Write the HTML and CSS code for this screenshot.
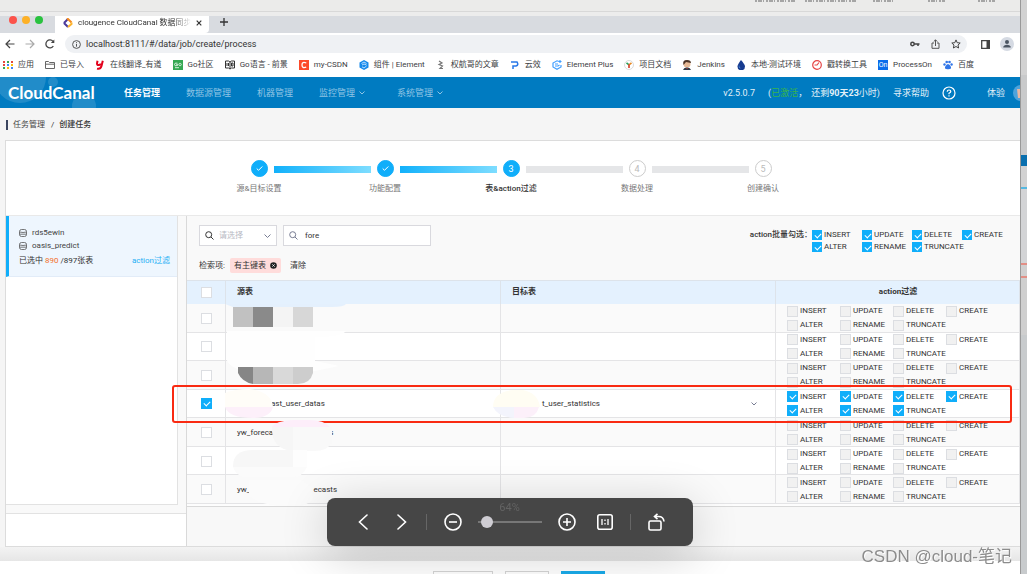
FILE: index.html
```html
<!DOCTYPE html>
<html lang="zh-CN">
<head>
<meta charset="utf-8">
<title>clougence CloudCanal 数据同步</title>
<link rel="stylesheet" href="styles.css">
</head>
<body>
<div class="desktop">
<div class="window">
  <div class="behind"><svg width="260" height="4" viewBox="0 0 260 4" aria-hidden="true"><path d="M0 1H40M50 1H102M118 1H138M173 1H190M223 1H240" stroke="#a5a5a5" stroke-width="2" stroke-dasharray="2 1 4 1 1 2"/></svg></div>

  <div class="tabbar">
    <div class="lights"><i class="red"></i><i class="amber"></i><i class="green"></i></div>
    <div class="tab">
      <svg width="10" height="10" viewBox="0 0 10 10" fill="none" stroke-width="2"><path d="M5 1 1.500 4.500v1L5 9" stroke="#4b3a9b"/><path d="M4 1.500 5 1l3.500 3.500" stroke="#f58b1f"/><path d="M8.500 4.500v1.500L5 9" stroke="#fdb52c"/></svg>
      <span class="tab-title">clougence CloudCanal 数据同步</span>
      <button class="icon-btn" aria-label="关闭"><svg width="6" height="6" viewBox="0 0 6 6" stroke="#333" stroke-width="1.200"><path d="m.7.7 4.600 4.600M5.300.7.7 5.300"/></svg></button>
    </div>
    <button class="icon-btn plus" aria-label="新标签页"><svg width="8" height="8" viewBox="0 0 8 8" stroke="#333" stroke-width="1.300"><path d="M4 0v8M0 4h8"/></svg></button>
  </div>

  <div class="toolbar">
    <button class="icon-btn" aria-label="后退"><svg width="10" height="10" viewBox="0 0 10 10" fill="none" stroke="#444" stroke-width="1.200"><path d="M9.500 5H1M5 1 1 5l4 4"/></svg></button>
    <button class="icon-btn" aria-label="前进"><svg width="10" height="10" viewBox="0 0 10 10" fill="none" stroke="#aaa" stroke-width="1.200"><path d="M.5 5H9M5 1l4 4-4 4"/></svg></button>
    <button class="icon-btn" aria-label="刷新"><svg width="10" height="10" viewBox="0 0 10 10" fill="none" stroke="#444" stroke-width="1.300"><path d="M8.300 7A4 4 0 1 1 8 2.400"/><path d="M9.300.5v3.500H5.800z" fill="#444" stroke="none"/></svg></button>
    <div class="address">
      <svg width="9" height="9" viewBox="0 0 9 9" fill="none" stroke="#555"><circle cx="4.500" cy="4.500" r="3.900"/><path d="M4.500 4v2.700M4.500 2.200v1"/></svg>
      <input class="url" aria-label="地址" value="localhost:8111/#/data/job/create/process">
      <svg width="10" height="8" viewBox="0 0 10 8" fill="none" stroke="#444" stroke-width="1.500"><circle cx="2.500" cy="4" r="1.700"/><path d="M4 4h5.500M8 4v2"/></svg>
      <svg width="9" height="10" viewBox="0 0 9 10" fill="none" stroke="#555"><path d="M3 4H1v5.300h7V4H6M4.500 7V1M2.700 2.600 4.500.8l1.800 1.800"/></svg>
      <svg width="10" height="10" viewBox="0 0 10 10" fill="none" stroke="#444"><path d="m5 .9 1.200 2.800 3 .3L7 6l.6 3L5 7.500 2.400 9 3 6 .8 4l3-.3z"/></svg>
    </div>
    <svg width="9" height="9" viewBox="0 0 9 9"><path d="M.7.7h7.600v7.600H.7z" fill="none" stroke="#444" stroke-width="1.300"/><path d="M5.500 0H9v9H5.500z" fill="#444"/></svg>
    <svg width="14" height="14" viewBox="0 0 14 14"><circle cx="7" cy="7" r="7" fill="#d5dae3"/><circle cx="7" cy="5" r="2" fill="#4b5563"/><path d="M3.200 10.500c0-3.600 7.600-3.600 7.600 0z" fill="#4b5563"/></svg>
  </div>

  <nav class="bookmarks" aria-label="书签">
    <a href="#"><svg viewBox="0 0 10 10"><path d="M0 2h10M0 5h10M0 8h10" stroke="#e5483b" stroke-width="2" stroke-dasharray="2"/><path d="M4 2h2M0 8h2" stroke="#35a853" stroke-width="2"/><path d="M4 5h2M8 8h2" stroke="#4285f4" stroke-width="2"/><path d="M8 5h2M4 8h2" stroke="#fbbc05" stroke-width="2"/></svg>应用</a>
    <a href="#"><svg viewBox="0 0 10 10" fill="none" stroke="#666"><path d="M.5 1.500h3l1 1h5v6h-9zM.5 4.200h9"/></svg>已导入</a>
    <a href="#"><svg viewBox="0 0 10 10" fill="none" stroke="#e3001b" stroke-width="2"><path d="M2.500.8 2 3.500q0 2 2 1.500l2-.8M7.800.8 6.500 6Q5.500 9.500 2 8.600"/></svg>在线翻译_有道</a>
    <a href="#"><svg viewBox="0 0 10 10"><path d="M0 0h10v10H0z" fill="#36a853"/><path d="M4.500 3.200q-3-.8-3 1.300t3 1V4.500H3.300M7 3.300a1.200 1.200 0 1 0 .1 0M2 7.700h4" fill="none" stroke="#fff" stroke-width=".8"/></svg>Go社区</a>
    <a href="#"><svg viewBox="0 0 10 10" fill="none" stroke="#333"><path d="M5 2v7L3.500 8H.5V1h3zM5 2l1.500-1h3v7h-3L5 9M2 3v3M3.500 3v3M6.500 3v3h1.500V3z"/></svg>Go语言 - 前景</a>
    <a href="#"><svg viewBox="0 0 10 10"><path d="M0 0h10v10H0z" fill="#fc4a2a"/><path d="M7.300 3Q3 1.300 3 5t4.200 2.200" fill="none" stroke="#fff" stroke-width="1.300"/></svg>my-CSDN</a>
    <a href="#"><svg viewBox="0 0 10 10"><path d="m5 0 4.500 2.500v5L5 10 .5 7.500v-5z" fill="#1689ea"/><path d="M2.500 3.500 5 2l2.500 1.500M3 5l2-1 2.500 1M3 6.800 5 8l2.500-2" fill="none" stroke="#b9ddff"/></svg>组件 | Element</a>
    <a href="#"><svg viewBox="0 0 10 10" fill="none" stroke="#777" stroke-width="1.200"><path d="m3 1 3 2-3 1.500L6.500 6 4 8.500h3"/></svg>权航哥的文章</a>
    <a href="#"><svg viewBox="0 0 10 10" fill="none" stroke="#2878e8" stroke-width="1.500"><path d="M1 2h6q2 3-1 4H3v3"/></svg>云效</a>
    <a href="#"><svg viewBox="0 0 10 10" fill="none" stroke="#409eff" stroke-width="1.200"><path d="M6.500 1.300 5 .8 1 3v4l4 2.200L9 7V5M3 4h3M3 6h3l1.500-1M8 0v3M6.500 1.500h3"/></svg>Element Plus</a>
    <a href="#"><svg viewBox="0 0 10 10" fill="none" stroke-width="1.700"><circle cx="5" cy="5" r="4.500" stroke="#ccc" stroke-width=".7"/><path d="m2.500 2.800 2.500 2" stroke="#28a05c"/><path d="M7.500 2.800 5 4.800" stroke="#e88924"/><path d="M5 4.500V8" stroke="#d8432f"/></svg>项目文档</a>
    <a href="#"><svg viewBox="0 0 10 10"><circle cx="5" cy="4" r="3.500" fill="#e6b995"/><path d="M1.500 5Q0 0 5 0q4 0 4 3L4 2z" fill="#4c3427"/><path d="M1 10q1-3 4-2.500Q8 7 9 10z" fill="#2d3944"/><path d="m4 8 1 1 1-1z" fill="#d33"/></svg>Jenkins</a>
    <a href="#"><svg viewBox="0 0 10 10"><path d="M5 0q4 4.500 4 6.500a3.500 3.500 0 0 1-7.500 0Q1.500 4.500 5 0" fill="#173b8f"/><path d="M3 5q-1 3 2 3.500Q3 7 3 5" fill="#4f9be8"/></svg>本地-测试环境</a>
    <a href="#"><svg viewBox="0 0 10 10" fill="none" stroke="#e64545" stroke-width="1.200"><circle cx="5" cy="5" r="4.300"/><path d="M7 2.500 5 5H2.500"/></svg>戳转换工具</a>
    <a href="#"><span class="on-mark">On</span>ProcessOn</a>
    <a href="#"><svg viewBox="0 0 10 10" fill="#3176e8"><circle cx="1.500" cy="4.500" r="1.200"/><circle cx="3.700" cy="2" r="1.300"/><circle cx="6.500" cy="2" r="1.300"/><circle cx="8.600" cy="4.500" r="1.200"/><path d="M5 4q1.500 0 3 3 .5 2.500-3 2.200Q1.500 9.500 2 7 3.500 4 5 4"/></svg>百度</a>
  </nav>

  <header class="app-nav">
    <svg class="bubbles" width="110" height="31" viewBox="0 0 110 31" fill="#fff" fill-opacity=".13" aria-hidden="true"><circle cx="20" cy="0" r="26"/><circle cx="53" cy="5" r="5"/><circle cx="84" cy="29" r="12"/></svg>
    <a class="logo" href="#">CloudCanal</a>
    <a class="menu on" href="#">任务管理</a>
    <a class="menu" href="#">数据源管理</a>
    <a class="menu" href="#">机器管理</a>
    <a class="menu drop" href="#">监控管理<svg width="6" height="4" viewBox="0 0 6 4" fill="none" stroke="currentColor"><path d="m.5.5 2.500 2.500L5.500.5"/></svg></a>
    <a class="menu" href="#">系统管理<svg width="6" height="4" viewBox="0 0 6 4" fill="none" stroke="currentColor"><path d="m.5.5 2.500 2.500L5.500.5"/></svg></a>
    <div class="status">
      <span>v2.5.0.7</span>
      <span class="license"><span>(<em>已激活</em>，</span><span>还剩<b>90天23</b>小时)</span></span>
      <a href="#">寻求帮助</a>
      <svg class="help" width="14" height="14" viewBox="0 0 14 14" fill="none" stroke="#fff" stroke-width="1.200"><circle cx="7" cy="7" r="6"/><path d="M5.200 5.700q0-1.700 1.800-1.700t1.800 1.500Q8.800 6.500 7 7.300v1M7 9.300v1.200"/></svg>
      <a class="trial" href="#">体验<svg width="7" height="16" viewBox="0 0 7 16"><circle cx="8" cy="8" r="8" fill="#4da3dc"/><path d="M4 4h3v9H5z" fill="#e9b8a2"/></svg></a>
    </div>
  </header>

  <div class="crumbs"><a href="#">任务管理</a><i>/</i><span>创建任务</span></div>

  <main class="card">
    <ol class="steps">
      <li class="step done"><i class="dot"><svg width="7" height="5" viewBox="0 0 7 5" fill="none" stroke="#fff"><path d="m.7 2.500 1.800 1.800L6.300.5"/></svg></i><span>源&amp;目标设置</span></li>
      <li class="bar filled"></li>
      <li class="step done"><i class="dot"><svg width="7" height="5" viewBox="0 0 7 5" fill="none" stroke="#fff"><path d="m.7 2.500 1.800 1.800L6.300.5"/></svg></i><span>功能配置</span></li>
      <li class="bar filled"></li>
      <li class="step done now"><i class="dot">3</i><span>表&amp;action过滤</span></li>
      <li class="bar"></li>
      <li class="step"><i class="dot">4</i><span>数据处理</span></li>
      <li class="bar"></li>
      <li class="step"><i class="dot">5</i><span>创建确认</span></li>
    </ol>

    <div class="split">
      <aside class="side">
        <div class="side-list">
          <div class="source">
            <div class="db"><svg width="8" height="8" viewBox="0 0 8 8" fill="none" stroke="#555" stroke-width=".8"><rect x=".5" y=".5" width="7" height="7" rx="2"/><path d="M.5 3q3.500 1 7 0M.5 5.200h7"/></svg>rds5ewin</div>
            <div class="db"><svg width="8" height="8" viewBox="0 0 8 8" fill="none" stroke="#555" stroke-width=".8"><rect x=".5" y=".5" width="7" height="7" rx="2"/><path d="M.5 3q3.500 1 7 0M.5 5.200h7"/></svg>oasis_predict</div>
            <div class="picked"><span>已选中 <em>890</em> /897张表</span><a href="#">action过滤</a></div>
          </div>
        </div>
        <div class="side-foot"></div>
      </aside>

      <section class="content">
        <div class="filters">
          <div class="search-side">
            <div class="fields">
              <div class="field pick">
                <svg width="9" height="9" viewBox="0 0 9 9" fill="none" stroke="#333"><circle cx="3.700" cy="3.700" r="3"/><path d="m6 6 2.500 2.500"/></svg>
                <select aria-label="筛选"><option>请选择</option></select>
                <svg width="7" height="4" viewBox="0 0 7 4" fill="none" stroke="#777c92"><path d="m.5.5 3 3 3-3"/></svg>
              </div>
              <div class="field find">
                <svg width="9" height="9" viewBox="0 0 9 9" fill="none" stroke="#777c92"><circle cx="3.700" cy="3.700" r="3"/><path d="m6 6 2.500 2.500"/></svg>
                <input aria-label="搜索表" value="fore">
              </div>
            </div>
            <div class="terms"><span>检索项:</span><span class="tag">有主键表<button class="icon-btn" aria-label="移除"><svg width="7" height="7" viewBox="0 0 7 7"><circle cx="3.500" cy="3.500" r="3.300" fill="#222"/><path d="m2.300 2.300 2.400 2.400M4.700 2.300 2.300 4.700" stroke="#fff" stroke-width=".8"/></svg></button></span><button class="clear">清除</button></div>
          </div>
          <div class="batch">
            <span>action批量勾选：</span>
            <div class="ops">
              <label><input type="checkbox" checked>INSERT</label><label><input type="checkbox" checked>UPDATE</label><label><input type="checkbox" checked>DELETE</label><label><input type="checkbox" checked>CREATE</label>
              <label><input type="checkbox" checked>ALTER</label><label><input type="checkbox" checked>RENAME</label><label><input type="checkbox" checked>TRUNCATE</label>
            </div>
          </div>
        </div>

        <div class="table-wrap">
          <table>
            <colgroup><col class="c-check"><col><col><col class="c-ops"></colgroup>
            <thead><tr><th class="tick"><input type="checkbox" aria-label="全选"></th><th>源表</th><th>目标表</th><th class="mid">action过滤</th></tr></thead>
            <tbody>
              <tr><td class="tick"><input type="checkbox" aria-label="选择第1行"></td><td></td><td></td><td><div class="ops"><label><input type="checkbox" disabled>INSERT</label><label><input type="checkbox" disabled>UPDATE</label><label><input type="checkbox" disabled>DELETE</label><label><input type="checkbox" disabled>CREATE</label><label><input type="checkbox" disabled>ALTER</label><label><input type="checkbox" disabled>RENAME</label><label><input type="checkbox" disabled>TRUNCATE</label></div></td></tr>
              <tr><td class="tick"><input type="checkbox" aria-label="选择第2行"></td><td></td><td></td><td><div class="ops"><label><input type="checkbox" disabled>INSERT</label><label><input type="checkbox" disabled>UPDATE</label><label><input type="checkbox" disabled>DELETE</label><label><input type="checkbox" disabled>CREATE</label><label><input type="checkbox" disabled>ALTER</label><label><input type="checkbox" disabled>RENAME</label><label><input type="checkbox" disabled>TRUNCATE</label></div></td></tr>
              <tr><td class="tick"><input type="checkbox" aria-label="选择第3行"></td><td></td><td></td><td><div class="ops"><label><input type="checkbox" disabled>INSERT</label><label><input type="checkbox" disabled>UPDATE</label><label><input type="checkbox" disabled>DELETE</label><label><input type="checkbox" disabled>CREATE</label><label><input type="checkbox" disabled>ALTER</label><label><input type="checkbox" disabled>RENAME</label><label><input type="checkbox" disabled>TRUNCATE</label></div></td></tr>
              <tr><td class="tick"><input type="checkbox" checked aria-label="选择第4行"></td><td><span class="hid lead"></span>ast_user_datas</td><td><div class="target"><span><span class="hid short"></span>t_user_statistics</span><svg width="6" height="4" viewBox="0 0 6 4" fill="none" stroke="#777c92"><path d="m.5.5 2.500 2.500L5.500.5"/></svg></div></td><td><div class="ops"><label><input type="checkbox" checked>INSERT</label><label><input type="checkbox" checked>UPDATE</label><label><input type="checkbox" checked>DELETE</label><label><input type="checkbox" checked>CREATE</label><label><input type="checkbox" checked>ALTER</label><label><input type="checkbox" checked>RENAME</label><label><input type="checkbox" checked>TRUNCATE</label></div></td></tr>
              <tr><td class="tick"><input type="checkbox" aria-label="选择第5行"></td><td>yw_foreca<span class="hid mid-gap"></span>s</td><td></td><td><div class="ops"><label><input type="checkbox" disabled>INSERT</label><label><input type="checkbox" disabled>UPDATE</label><label><input type="checkbox" disabled>DELETE</label><label><input type="checkbox" disabled>CREATE</label><label><input type="checkbox" disabled>ALTER</label><label><input type="checkbox" disabled>RENAME</label><label><input type="checkbox" disabled>TRUNCATE</label></div></td></tr>
              <tr><td class="tick"><input type="checkbox" aria-label="选择第6行"></td><td></td><td></td><td><div class="ops"><label><input type="checkbox" disabled>INSERT</label><label><input type="checkbox" disabled>UPDATE</label><label><input type="checkbox" disabled>DELETE</label><label><input type="checkbox" disabled>CREATE</label><label><input type="checkbox" disabled>ALTER</label><label><input type="checkbox" disabled>RENAME</label><label><input type="checkbox" disabled>TRUNCATE</label></div></td></tr>
              <tr><td class="tick"><input type="checkbox" aria-label="选择第7行"></td><td>yw_<span class="hid wide-gap"></span>ecasts</td><td></td><td><div class="ops"><label><input type="checkbox" disabled>INSERT</label><label><input type="checkbox" disabled>UPDATE</label><label><input type="checkbox" disabled>DELETE</label><label><input type="checkbox" disabled>CREATE</label><label><input type="checkbox" disabled>ALTER</label><label><input type="checkbox" disabled>RENAME</label><label><input type="checkbox" disabled>TRUNCATE</label></div></td></tr>
            </tbody>
          </table>
          <div class="marker"></div>
          <svg class="smudges" width="380" height="230" viewBox="0 0 380 230" aria-hidden="true">
            <path d="M38 24h121q-2 3-14 3H46z" fill="#e4f0fd"/>
            <path d="M40 51h119q-5 6-31 6v24q20 4 24 5l-24 5H68Q40 91 39 76z" fill="#fefefe"/>
            <path d="M46 27h20v20H46z" fill="#c1c1c1"/><path d="M66 27h20v20H66z" fill="#8a8a8a"/><path d="M86 27h20v20H86z" fill="#f4f4f4"/><path d="M106 27h20v20h-20z" fill="#d7d7d7"/>
            <path d="M51 87h15v17q-11-2-15-11z" fill="#868686"/><path d="M66 87h20v17H66z" fill="#b7b7b7"/><path d="M86 87h20v17H86z" fill="#d9d9d9"/><path d="M106 87h20v6q-3 11-15 11h-5z" fill="#cdcdcd"/>
            <path d="M38 127V113q10-4 24-4 23 3 24 18z" fill="#fffdf8"/><path d="M38 127h48q-3 11-20 11-24 0-28-11z" fill="#fdf0fa"/>
            <path d="M306 127q0-15 20-17h10q15 3 17 17z" fill="#fffdf3"/><path d="M306 127h21v11q-16-1-21-11z" fill="#f3f4fc"/><path d="M327 127h25q-3 11-15 11h-10z" fill="#fcf0fa"/>
            <path d="M85 147q3-6 22-7h15q15 0 21 7z" fill="#fdeefa"/><path d="M85 147h21v24q-22-2-21-24z" fill="#f6f6f6"/><path d="M106 147h39v15q-4 9-18 9h-21z" fill="#f9f9f9"/>
            <path d="M46 186q0-16 20-16h40v17H46z" fill="#f7f7f7"/><path d="M106 170h14v17h-14z" fill="#fdfdfd"/><path d="M46 187h74q-4 10-15 10H56q-8-3-10-10z" fill="#fbfbfb"/>
            <path d="M62 200h50q14 3 14 20l-10 6h-26q-20-3-28-10z" fill="#fbfbfb"/>
          </svg>
        </div>
        <div class="table-foot"></div>
      </section>
    </div>
  </main>

  <div class="page-shade"></div>
  <footer class="actions"><button aria-label="上一步"></button><button class="small" aria-label="取消"></button><button class="small primary" aria-label="下一步"></button></footer>
</div>
<div class="edge"></div>
</div>

<div class="viewer">
  <button class="icon-btn" aria-label="上一张"><svg width="10" height="16" viewBox="0 0 10 16" fill="none" stroke="#fff" stroke-width="1.600" stroke-linecap="round"><path d="M9 1 1.500 8 9 15"/></svg></button>
  <button class="icon-btn next" aria-label="下一张"><svg width="10" height="16" viewBox="0 0 10 16" fill="none" stroke="#fff" stroke-width="1.600" stroke-linecap="round"><path d="m1 1 7.500 7L1 15"/></svg></button>
  <i class="rule"></i>
  <button class="icon-btn" aria-label="缩小"><svg width="18" height="18" viewBox="0 0 18 18" fill="none" stroke="#fff" stroke-width="1.600"><circle cx="9" cy="9" r="8"/><path d="M5 9h8"/></svg></button>
  <div class="zoom"><output for="zoom">64%</output><input id="zoom" type="range" min="0" max="100" value="7" aria-label="缩放"></div>
  <button class="icon-btn" aria-label="放大"><svg width="18" height="18" viewBox="0 0 18 18" fill="none" stroke="#fff" stroke-width="1.600"><circle cx="9" cy="9" r="8"/><path d="M5 9h8M9 5v8"/></svg></button>
  <button class="icon-btn fit" aria-label="实际大小"><svg width="16" height="16" viewBox="0 0 16 16" fill="none" stroke="#fff" stroke-width="1.600"><rect x=".8" y=".8" width="14.400" height="14.400" rx="2"/><path d="M5 5v6M11 5v6M8 5.500V7M8 9v1.500" stroke-width="1.300"/></svg></button>
  <i class="rule"></i>
  <button class="icon-btn" aria-label="旋转"><svg width="17" height="18" viewBox="0 0 17 18" fill="none" stroke="#fff" stroke-width="1.600"><rect x="1" y="8" width="12" height="9" rx="1.500"/><path d="M9.500.8 6.500 3.500l3 2.700M7 3.500h3.500q5 0 5.500 5"/></svg></button>
</div>
<div class="watermark">CSDN @cloud-笔记</div>
</body>
</html>
```
FILE: styles.css
```css
* { box-sizing: border-box; }
html, body { height: 100%; margin: 0; overflow: hidden; }
body { font: 8px/12px Roboto, "Noto Sans CJK SC", sans-serif; color: #333; background: #fff; }
a { color: inherit; text-decoration: none; }
em, i { font-style: normal; }
svg { flex: none; display: block; }
button, input, select { font: inherit; color: inherit; margin: 0; }
.icon-btn { border: 0; padding: 0; background: none; display: flex; }

.desktop { display: flex; height: 100vh; overflow: hidden; }
.window { flex: 1; display: flex; flex-direction: column; min-width: 0; background: #f5f5f5; }
.window > * { flex: none; }
.edge { width: 7px; border-left: 1px solid #999; background: linear-gradient(#d2d2d2 0 75px, #c9cacb 75px 155px, #0a6fae 155px 166px, #d2d2d2 166px 187px, #56b8e0 187px 189px, #d3d4d6 189px 263px, #e28f86 263px 265px, #d0d0d0 265px 276px, #e28f86 276px 278px, #cfcfcf 278px 335px, #c8cbcd 335px); }

.behind { height: 16px; padding-left: 755px; overflow: hidden; background: linear-gradient(#ebebea 0 11px, #d8d8d8 11px 12px, #ececec 12px); }

.tabbar { display: flex; height: 17px; background: #d8dbe0; }
.lights { display: flex; gap: 5px; width: 55px; padding-left: 9px; }
.lights i { width: 8px; height: 8px; border-radius: 50%; }
.red { background: #fc534b; } .amber { background: #fdb127; } .green { background: #29c23f; }
.tab { display: flex; align-items: center; width: 154px; padding: 0 7px 4px 8px; gap: 5px; background: #fff; border-radius: 0 0 4px 0; }
.tab-title { flex: 1; overflow: hidden; white-space: nowrap; -webkit-mask-image: linear-gradient(90deg, #000 85%, transparent); mask-image: linear-gradient(90deg, #000 85%, transparent); }
.plus { padding: 2px 11px; }

.toolbar { display: flex; align-items: center; gap: 10px; height: 22px; padding: 0 6px 0 5px; background: #fff; }
.address { flex: 1; display: flex; align-items: center; gap: 11px; height: 18px; padding: 0 6px 0 7px; border-radius: 9px; background: #eff1f4; }
.address + svg { margin-left: 4px; }
.url { flex: 1; min-width: 0; margin-left: -6px; border: 0; padding: 0; background: none; font-size: 9px; color: #333; }

.bookmarks { display: flex; gap: 11px; height: 22px; padding: 0 3px 2px; background: #fff; white-space: nowrap; color: #3c4043; }
.bookmarks a { display: flex; align-items: center; gap: 5px; }
.bookmarks svg { width: 10px; height: 10px; }
.on-mark { width: 10px; background: #0b6cea; color: #fff; font-size: 7px; line-height: 10px; text-align: center; }

.app-nav { position: relative; display: flex; align-items: center; height: 31px; padding-left: 8px; background: #007bc1; color: #e3f0f8; font-size: 9px; white-space: nowrap; }
.bubbles { position: absolute; left: 0; top: 0; }
.logo { width: 116px; color: #fff; font: 700 17px/24px Lato, sans-serif; }
.menu { display: flex; align-items: center; gap: 4px; margin-right: 26px; color: #8fc4e4; }
.menu.on { color: #fff; font-weight: 700; }
.drop { margin-right: 32px; }
.status { display: flex; align-items: center; gap: 13px; margin-left: auto; }
.license { display: flex; gap: 4px; } .license em { color: #38b449; }
.help { margin-right: 18px; }
.trial { display: flex; align-items: center; gap: 8px; }

.crumbs { display: flex; align-items: center; height: 32px; padding: 1px 0 0 6px; }
.crumbs a { border-left: 2px solid #3c4660; padding-left: 5px; line-height: 10px; color: #444; }
.crumbs i { margin: 0 5px 0 6px; }
.crumbs span { font-weight: 500; }

.card { margin-left: 5px; border: 1px solid #dcdcdc; border-right: 0; background: #f9f9f9; }
.steps { display: flex; justify-content: center; gap: 6px; height: 75px; margin: 0; padding: 19px 4px 0 0; list-style: none; background: #fff; border-bottom: 1px solid #e9e9e9; }
.step { display: flex; flex-direction: column; align-items: center; gap: 6px; width: 17px; white-space: nowrap; color: #777; }
.dot { display: flex; align-items: center; justify-content: center; width: 17px; height: 17px; border: 1px solid #ccc; border-radius: 50%; color: #bbb; font-size: 9px; flex: none; }
.done .dot { border-color: #10aefa; background: #10aefa; color: #fff; }
.now span { color: #333; font-weight: 500; }
.bar { width: 97px; height: 7px; margin-top: 6px; background: #e5e6e8; }
.filled { background: linear-gradient(90deg, #12b1fb, #7eddff); }

.split { display: flex; }
.side { display: flex; flex-direction: column; width: 181px; border-right: 1px solid #d9d9d9; }
.side-list { flex: 1; margin: 0 8px 8px 0; border: solid #e2e2e2; border-width: 0 1px 1px 0; background: #fff; }
.source { height: 61px; padding: 10px 7px 0 10px; border-left: 3px solid #10aefa; background: #eef6fe; border-bottom: 1px solid #e2ecf8; }
.db { display: flex; align-items: center; gap: 5px; height: 13px; color: #444; }
.picked { display: flex; justify-content: space-between; margin-top: 3px; }
.picked em { color: #f3702a; } .picked a { color: #1fb0f5; }
.side-foot { height: 33px; border-top: 1px solid #e2e2e2; background: #fff; }

.content { flex: 1; min-width: 0; }
.filters { display: flex; justify-content: space-between; height: 64px; padding: 9px 8px 0 12px; }
.fields { display: flex; gap: 6px; }
.field { display: flex; align-items: center; gap: 5px; height: 21px; padding: 0 5px; border: 1px solid #d9d9de; background: #fff; }
.pick { width: 78px; } .find { width: 148px; }
.field select { flex: 1; min-width: 0; appearance: none; border: 0; padding: 0; background: none; color: #b8bac4; }
.find input { flex: 1; min-width: 0; border: 0; padding: 0 2px; background: none; }
.terms { display: flex; align-items: center; height: 15px; margin-top: 12px; }
.tag { display: flex; align-items: center; gap: 4px; height: 15px; margin: 0 9px 0 5px; padding: 0 4px; border-radius: 2px; background: #ffdcdb; }
.clear { border: 0; padding: 0; background: none; }
.batch { display: flex; padding-top: 4px; font-weight: 500; }
.batch .ops { grid-template-columns: repeat(4, 50px); grid-auto-rows: 12px; font-weight: 400; }

.ops { display: grid; grid-template-columns: repeat(4, 53px); grid-auto-rows: 14px; }
.ops label { display: flex; align-items: center; gap: 2px; white-space: nowrap; }
input[type=checkbox] { flex: none; appearance: none; display: block; width: 11px; height: 11px; border: 1px solid #dcdee2; background: #fff; }
input[type=checkbox]:disabled { background: #f1f1f1; }
input[type=checkbox]:checked { border-color: #10aefa; background: #10aefa; }
.batch input[type=checkbox] { width: 10px; height: 10px; }
input[type=checkbox]:checked::after { content: ""; display: block; width: 5px; height: 3px; margin: 2px; border: solid #fff; border-width: 0 0 1px 1px; transform: rotate(-45deg); }

.table-wrap { position: relative; border-bottom: 1px solid #d9d9d9; padding-bottom: 2px; background: #fdfdfd; }
table { width: 100%; height: 224px; table-layout: fixed; border-collapse: separate; border-spacing: 0; }
.c-check { width: 39px; } .c-ops { width: 244px; }
th { height: 24px; padding: 0 11px; background: #e4f1fe; text-align: left; font-weight: 700; box-shadow: inset -1px 1px #dde3ea; }
td { padding: 0 11px; box-shadow: inset -1px -1px #e4e4e6; background: #fff; white-space: nowrap; }
tbody tr:nth-child(odd) td { background: #fafafa; }
.tick { padding: 0 14px; } .mid { text-align: center; }
.hid { display: inline-block; } .lead { width: 34px; } .short { width: 30px; } .mid-gap { width: 56px; } .wide-gap { width: 63px; }
.target { display: flex; align-items: center; justify-content: space-between; padding-right: 8px; }
.marker { position: absolute; top: 105px; left: -15px; right: 8px; height: 38px; border: 2px solid #f92a12; border-radius: 3px; }
.smudges { position: absolute; top: 0; left: 0; }
.table-foot { height: 39px; background: #f8f8f8; }

.page-shade { height: 14px; background: linear-gradient(#f3f3f3, #e6e6e6); }
.actions { display: flex; justify-content: center; gap: 12px; padding: 10px 0 0 17px; background: #fff; }
.window > .actions { flex: 1; min-height: 0; overflow: hidden; }
.actions button { width: 60px; height: 21px; border: 1px solid #d5d5d5; background: #fff; }
.actions .small { width: 44px; } .actions .primary { border-color: #1aabea; background: #1aabea; }

.viewer { position: fixed; left: 50%; bottom: 28px; transform: translateX(-50%); display: flex; align-items: center; gap: 17px; width: 366px; height: 48px; margin-left: -4px; padding-left: 31px; border-radius: 8px; background: #464646; box-shadow: 0 8px 48px rgba(0, 0, 0, .2); }
.next { margin: 0 2px 0 12px; }
.fit { margin-left: 4px; }
.rule { width: 1px; height: 16px; background: #666; }
.zoom { display: flex; flex-direction: column; align-items: center; width: 64px; height: 48px; margin: 0 -1px; padding-top: 4px; }
.zoom output { color: #636363; font-size: 11px; line-height: 12px; }
.zoom input { width: 64px; height: 16px; appearance: none; background: linear-gradient(#777, #777) center / 100% 2px no-repeat; }
.zoom input::-webkit-slider-thumb { appearance: none; width: 12px; height: 12px; border-radius: 50%; background: #cfcdd3; }
.watermark { position: fixed; right: 15px; bottom: 5px; color: #8c8c8c; font: 17px/24px "Liberation Sans", "Noto Sans CJK SC", sans-serif; text-shadow: 1px 1px #fff; }
```
